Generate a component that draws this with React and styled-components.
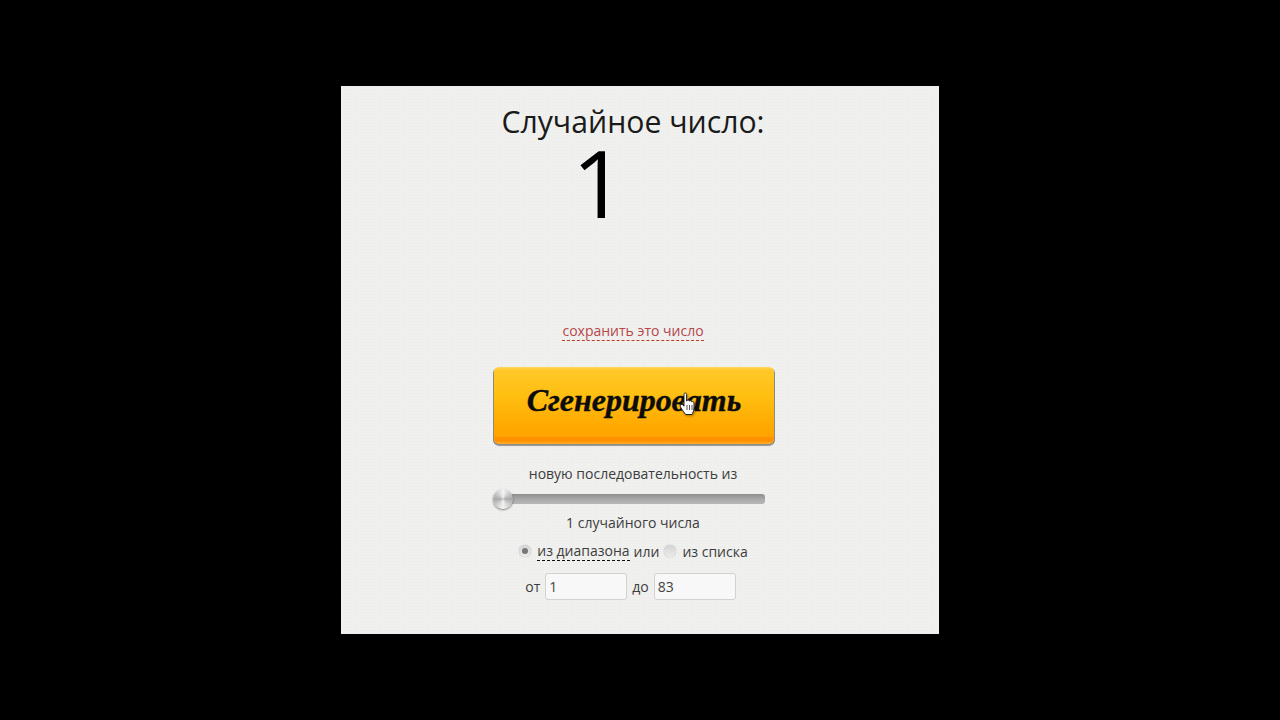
import React from 'react';
import styled, { createGlobalStyle } from 'styled-components';

const GlobalStyle = createGlobalStyle`
html, body {
  margin: 0;
  height: 100%;
  background: #000;
}
#root {
  height: 100%;
}
`;

const Page = styled.div`
  height: 720px;
  display: flex;
  align-items: center;
  justify-content: center;
  background: #000;
`;

const Panel = styled.div`
  width: 598px;
  height: 548px;
  box-sizing: border-box;
  padding: 17px 14px 0 0;
  display: flex;
  flex-direction: column;
  align-items: center;
  color: #333;
  font-family: "Open Sans", "Liberation Sans", sans-serif;
  font-size: 14px;
  background-color: #f0f0ef;
  background-image: radial-gradient(rgba(0,0,0,.025) 1px, transparent 1px);
  background-size: 3px 3px;
`;

const Title = styled.div`
  font-size: 30.2px;
  line-height: 38px;
  color: #1a1a1a;
`;

const Result = styled.div`
  width: 264px;
  height: 181px;
  padding-left: 71px;
  box-sizing: border-box;
  font-size: 94px;
  font-weight: 500;
  line-height: 82px;
  color: #000;
`;

const SaveLink = styled.a`
  font-size: 14px;
  line-height: 18px;
  color: #b5474a;
  border-bottom: 1px dashed #c0392b;
`;

const GenerateButton = styled.button`
  position: relative;
  width: 280px;
  height: 77px;
  margin: 26px 0 0 2px;
  padding: 0 0 11px;
  border: 0;
  border-radius: 5px;
  font-family: "Liberation Serif", serif;
  font-size: 32px;
  font-weight: bold;
  font-style: italic;
  -webkit-text-stroke: 0.4px #0c0c0c;
  color: #0c0c0c;
  background: linear-gradient(#ffd860 0, #ffc828 3px, #ffbe10 30px, #ffa800 60px, #ffa400 69px, #ff9000 71px, #ff9000 74px, #ffb030 77px);
  box-shadow: 1px 1px 0 #8d8a80, -1px 1px 0 #8d8a80, 0 2px 1px rgba(90,90,90,.6);
`;

const Pointer = styled.svg`
  position: absolute;
  left: 185px;
  top: 25px;
  width: 17px;
  height: 24px;
  filter: drop-shadow(1px 1px 1px rgba(0,0,0,.35));
`;

const Caption = styled.div`
  margin-top: ${({top}) => top}px;
  line-height: 20px;
  color: #3d3d3d;
`;

const SliderTrack = styled.div`
  position: relative;
  width: 268px;
  height: 10px;
  margin: 10px 4px 0 0;
  border-radius: 3px;
  background: linear-gradient(#8e8e8e, #a8a8a8 50%, #b8b8b8);
`;

const SliderKnob = styled.div`
  position: absolute;
  left: -4px;
  top: -5px;
  width: 20px;
  height: 20px;
  border-radius: 50%;
  background: conic-gradient(#f4f4f4, #aaa 25%, #f4f4f4 50%, #aaa 75%, #f4f4f4);
  box-shadow: 0 1px 2px rgba(0,0,0,.5);
`;

const SourceRow = styled.div`
  display: flex;
  align-items: center;
  margin-top: 8px;
  height: 20px;
  color: #3d3d3d;
`;

const Radio = styled.span`
  display: flex;
  align-items: center;
  justify-content: center;
  width: 12px;
  height: 12px;
  margin: ${({checked}) => checked ? '0 6px 0 1px' : '0 6px 0 5px'};
  border-radius: 50%;
  background: linear-gradient(#d4d4d4, #ececec);
  box-shadow: 0 0 1px rgba(0,0,0,.5);

  &::after {
    content: '';
    display: ${({checked}) => checked ? 'block' : 'none'};
    width: 6px;
    height: 6px;
    border-radius: 50%;
    background: #777;
  }
`;

const ModeLink = styled.span`
  margin-right: 4px;
  border-bottom: 1px dashed #111;
  line-height: 18px;
`;

const RangeRow = styled.div`
  display: flex;
  align-items: center;
  gap: 5px;
  margin: 12px 5px 0 0;
  color: #3d3d3d;
`;

const RangeInput = styled.input`
  width: 82px;
  height: 27px;
  box-sizing: border-box;
  padding: 0 3px;
  border: 1px solid #d2d2d2;
  border-radius: 3px;
  font-family: inherit;
  font-size: 14px;
  color: #444;
  background: #f8f8f8;
  outline: none;
`;

export default function App() {
  return (
    <Page>
      <GlobalStyle />
      <Panel>
        <Title>Случайное число:</Title>
        <Result>1</Result>
        <SaveLink>сохранить это число</SaveLink>
        <GenerateButton>
          Сгенерировать
          <Pointer viewBox="0 0 17 24">
            <path d="M5 2.5c0-2 2.6-2 2.6 0V9l.4-.3c.7-1 2.2-.6 2.4.4.8-.8 2.2-.4 2.4.7.9-.6 2.2 0 2.2 1.2V16c0 3-1.6 5.5-2 6.5H6.500C5.500 20.500 3 18 1.500 15c-1-2 1-3.500 2.500-2l1 1.200z" fill="#fff" stroke="#222" strokeWidth="1" />
            <path d="M8 13v5M10.500 13v5M13 13v5" stroke="#555" strokeWidth="1" fill="none" />
          </Pointer>
        </GenerateButton>
        <Caption top={20}>новую последовательность из</Caption>
        <SliderTrack><SliderKnob /></SliderTrack>
        <Caption top={9}>1 случайного числа</Caption>
        <SourceRow>
          <Radio checked />
          <ModeLink>из диапазона</ModeLink>
          или
          <Radio />
          из списка
        </SourceRow>
        <RangeRow>
          от
          <RangeInput defaultValue="1" />
          до
          <RangeInput defaultValue="83" />
        </RangeRow>
      </Panel>
    </Page>
  );
}
